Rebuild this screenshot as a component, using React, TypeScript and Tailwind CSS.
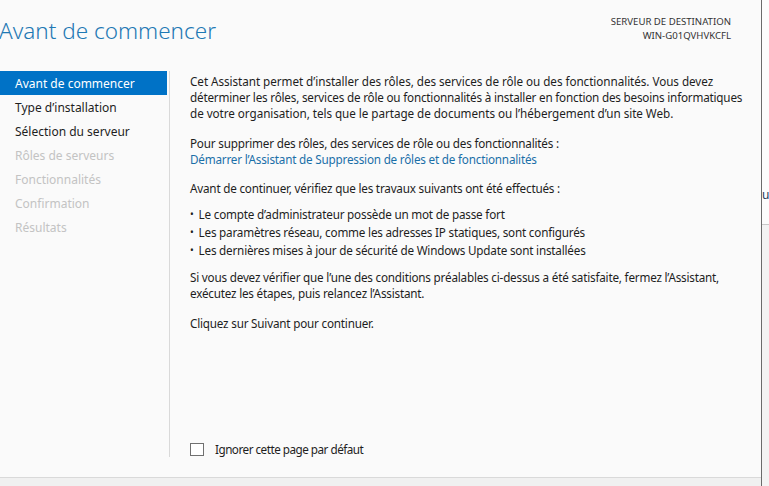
const font = { fontFamily: '"Segoe UI", "Noto Sans", sans-serif' };

const steps = [
  { label: "Avant de commencer", state: "active" },
  { label: "Type d\u2019installation", state: "done" },
  { label: "S\u00e9lection du serveur", state: "done" },
  { label: "R\u00f4les de serveurs", state: "off" },
  { label: "Fonctionnalit\u00e9s", state: "off" },
  { label: "Confirmation", state: "off" },
  { label: "R\u00e9sultats", state: "off" },
];

const bullets = [
  "Le compte d\u2019administrateur poss\u00e8de un mot de passe fort",
  "Les param\u00e8tres r\u00e9seau, comme les adresses IP statiques, sont configur\u00e9s",
  "Les derni\u00e8res mises \u00e0 jour de s\u00e9curit\u00e9 de Windows Update sont install\u00e9es",
];

function Sidebar() {
  return (
    <div className="w-[169px] shrink-0 text-[12px]">
      {steps.map((s) => (
        <div
          key={s.label}
          className={
            s.state === "active"
              ? "h-6 w-[167px] pl-[15px] pt-px flex items-center bg-[#0072c6] text-white"
              : s.state === "done"
              ? "h-6 pl-[15px] pt-px flex items-center text-[#1e1e1e]"
              : "h-6 pl-[15px] pt-px flex items-center text-[#c3c3c3]"
          }
        >
          {s.label}
        </div>
      ))}
    </div>
  );
}

function Content() {
  return (
    <div className="flex-1 flex flex-col border-l border-[#d9d9d9] pl-5 pt-[2px] text-[11.7px] tracking-[-0.2px] text-[#1e1e1e] leading-4 whitespace-nowrap">
      <p className="tracking-[-0.05px]">
        Cet Assistant permet d’installer des rôles, des services de rôle ou des fonctionnalités. Vous devez
        <br />
        <span className="tracking-[-0.2px]">
          déterminer les rôles, services de rôle ou fonctionnalités à installer en fonction des besoins informatiques
        </span>
        <br />
        de votre organisation, tels que le partage de documents ou l’hébergement d’un site Web.
      </p>
      <p className="mt-[14px]">
        Pour supprimer des rôles, des services de rôle ou des fonctionnalités :
        <br />
        <span className="text-[#1a6fa8]">Démarrer l’Assistant de Suppression de rôles et de fonctionnalités</span>
      </p>
      <p className="mt-[13px]">Avant de continuer, vérifiez que les travaux suivants ont été effectués :</p>
      <ul className="mt-[10px] flex flex-col gap-[2px]">
        {bullets.map((b) => (
          <li key={b} className="flex items-center gap-[5px]">
            <span className="text-[10px]">•</span>
            {b}
          </li>
        ))}
      </ul>
      <p className="mt-[11px]">
        Si vous devez vérifier que l’une des conditions préalables ci-dessus a été satisfaite, fermez l’Assistant,
        <br />
        exécutez les étapes, puis relancez l’Assistant.
      </p>
      <p className="mt-[14px]">Cliquez sur Suivant pour continuer.</p>
      <label className="mt-auto h-4 flex items-center gap-[11px]">
        <span className="w-[14px] h-[13px] border border-[#707070] bg-white" />
        <span className="tracking-[-0.5px]">Ignorer cette page par défaut</span>
      </label>
    </div>
  );
}

export default function App() {
  return (
    <div className="w-[769px] h-[486px] flex overflow-hidden" style={font}>
      <div className="w-[761px] shrink-0 flex flex-col bg-[#fafafa]">
        <div className="h-[71px] flex justify-between">
          <h1 className="ml-[-1px] mt-[17px] text-[22.5px] font-light leading-7 text-[#1f79b4]">
            Avant de commencer
          </h1>
          <div className="mr-[30px] mt-[15px] text-right text-[9.6px] leading-[14px] text-[#333]">
            <div>SERVEUR DE DESTINATION</div>
            <div>WIN-G01QVHVKCFL</div>
          </div>
        </div>
        <div className="h-[386px] flex">
          <Sidebar />
          <Content />
        </div>
        <div className="flex-1" />
        <div className="h-[9px] border-t border-[#d9d9d9] bg-[#f0f0f0]" />
      </div>
      <div className="w-px shrink-0 bg-[#6b6b6b]" />
      <div className="flex-1 flex flex-col overflow-hidden">
        <div className="h-[224px] bg-[#fcfcfc] pt-[187px] text-[12px] text-[#1e3a5a] leading-4">
          <span>u</span>
        </div>
        <div className="h-px bg-[#c8c8c8]" />
        <div className="flex-1 bg-[#f3f3f3]" />
      </div>
    </div>
  );
}
